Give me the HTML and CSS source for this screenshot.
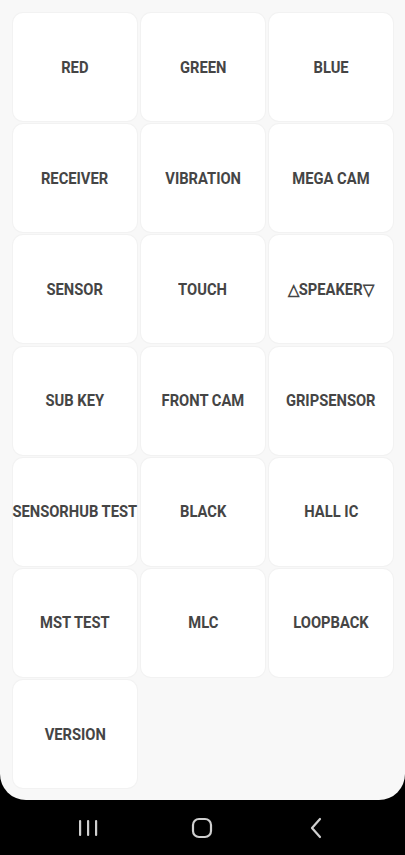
FILE: index.html
```html
<!DOCTYPE html>
<html>
<head>
<meta charset="utf-8">
<link rel="stylesheet" href="styles.css">
</head>
<body>
<div class="screen">
  <div class="grid">
    <div class="card"><span class="label">RED</span></div>
    <div class="card"><span class="label">GREEN</span></div>
    <div class="card"><span class="label">BLUE</span></div>
    <div class="card"><span class="label">RECEIVER</span></div>
    <div class="card"><span class="label">VIBRATION</span></div>
    <div class="card"><span class="label">MEGA CAM</span></div>
    <div class="card"><span class="label">SENSOR</span></div>
    <div class="card"><span class="label">TOUCH</span></div>
    <div class="card"><span class="label">△SPEAKER▽</span></div>
    <div class="card"><span class="label">SUB KEY</span></div>
    <div class="card"><span class="label">FRONT CAM</span></div>
    <div class="card"><span class="label">GRIPSENSOR</span></div>
    <div class="card"><span class="label">SENSORHUB TEST</span></div>
    <div class="card"><span class="label">BLACK</span></div>
    <div class="card"><span class="label">HALL IC</span></div>
    <div class="card"><span class="label">MST TEST</span></div>
    <div class="card"><span class="label">MLC</span></div>
    <div class="card"><span class="label">LOOPBACK</span></div>
    <div class="card"><span class="label">VERSION</span></div>
  </div>
</div>
<div class="nav">
  <svg class="nav-icon" width="24" height="20" viewBox="0 0 24 20"><rect x="3" y="2" width="2.2" height="16" rx="1" fill="#cfcfcf"/><rect x="11" y="2" width="2.2" height="16" rx="1" fill="#cfcfcf"/><rect x="19" y="2" width="2.2" height="16" rx="1" fill="#cfcfcf"/></svg>
  <svg class="nav-icon" width="24" height="22" viewBox="0 0 24 22"><rect x="3" y="2" width="18" height="18" rx="6" fill="none" stroke="#cfcfcf" stroke-width="2.2"/></svg>
  <svg class="nav-icon" width="24" height="22" viewBox="0 0 24 22"><path d="M16 2 L8 11 L16 20" fill="none" stroke="#cfcfcf" stroke-width="2.2" stroke-linecap="round" stroke-linejoin="round"/></svg>
</div>
</body>
</html>
```

FILE: styles.css
```css
html, body {
  margin: 0;
  padding: 0;
  background: #000;
}
body {
  width: 405px;
  height: 855px;
  overflow: hidden;
  font-family: Roboto, "Liberation Sans", sans-serif;
}
.screen {
  height: 800px;
  background: #f8f8f8;
  border-radius: 0 0 26px 26px;
  box-sizing: border-box;
  padding: 13px 12px 0 13px;
}
.grid {
  display: grid;
  grid-template-columns: 124px 124px 124px;
  grid-auto-rows: 108px;
  column-gap: 4px;
  row-gap: 3.2px;
}
.card {
  background: #fff;
  border-radius: 10px;
  box-shadow: 0 0 0 1px #f2f2f2;
  display: flex;
  align-items: center;
  justify-content: center;
  overflow: visible;
}
.label {
  display: inline-block;
  font-weight: 700;
  font-size: 16px;
  color: #454545;
  white-space: nowrap;
  transform: scaleX(0.92);
}
.nav {
  height: 55px;
  display: flex;
  align-items: center;
  justify-content: space-between;
  padding: 0 77px 0 76px;
}
.nav-icon {
  display: block;
}
```
